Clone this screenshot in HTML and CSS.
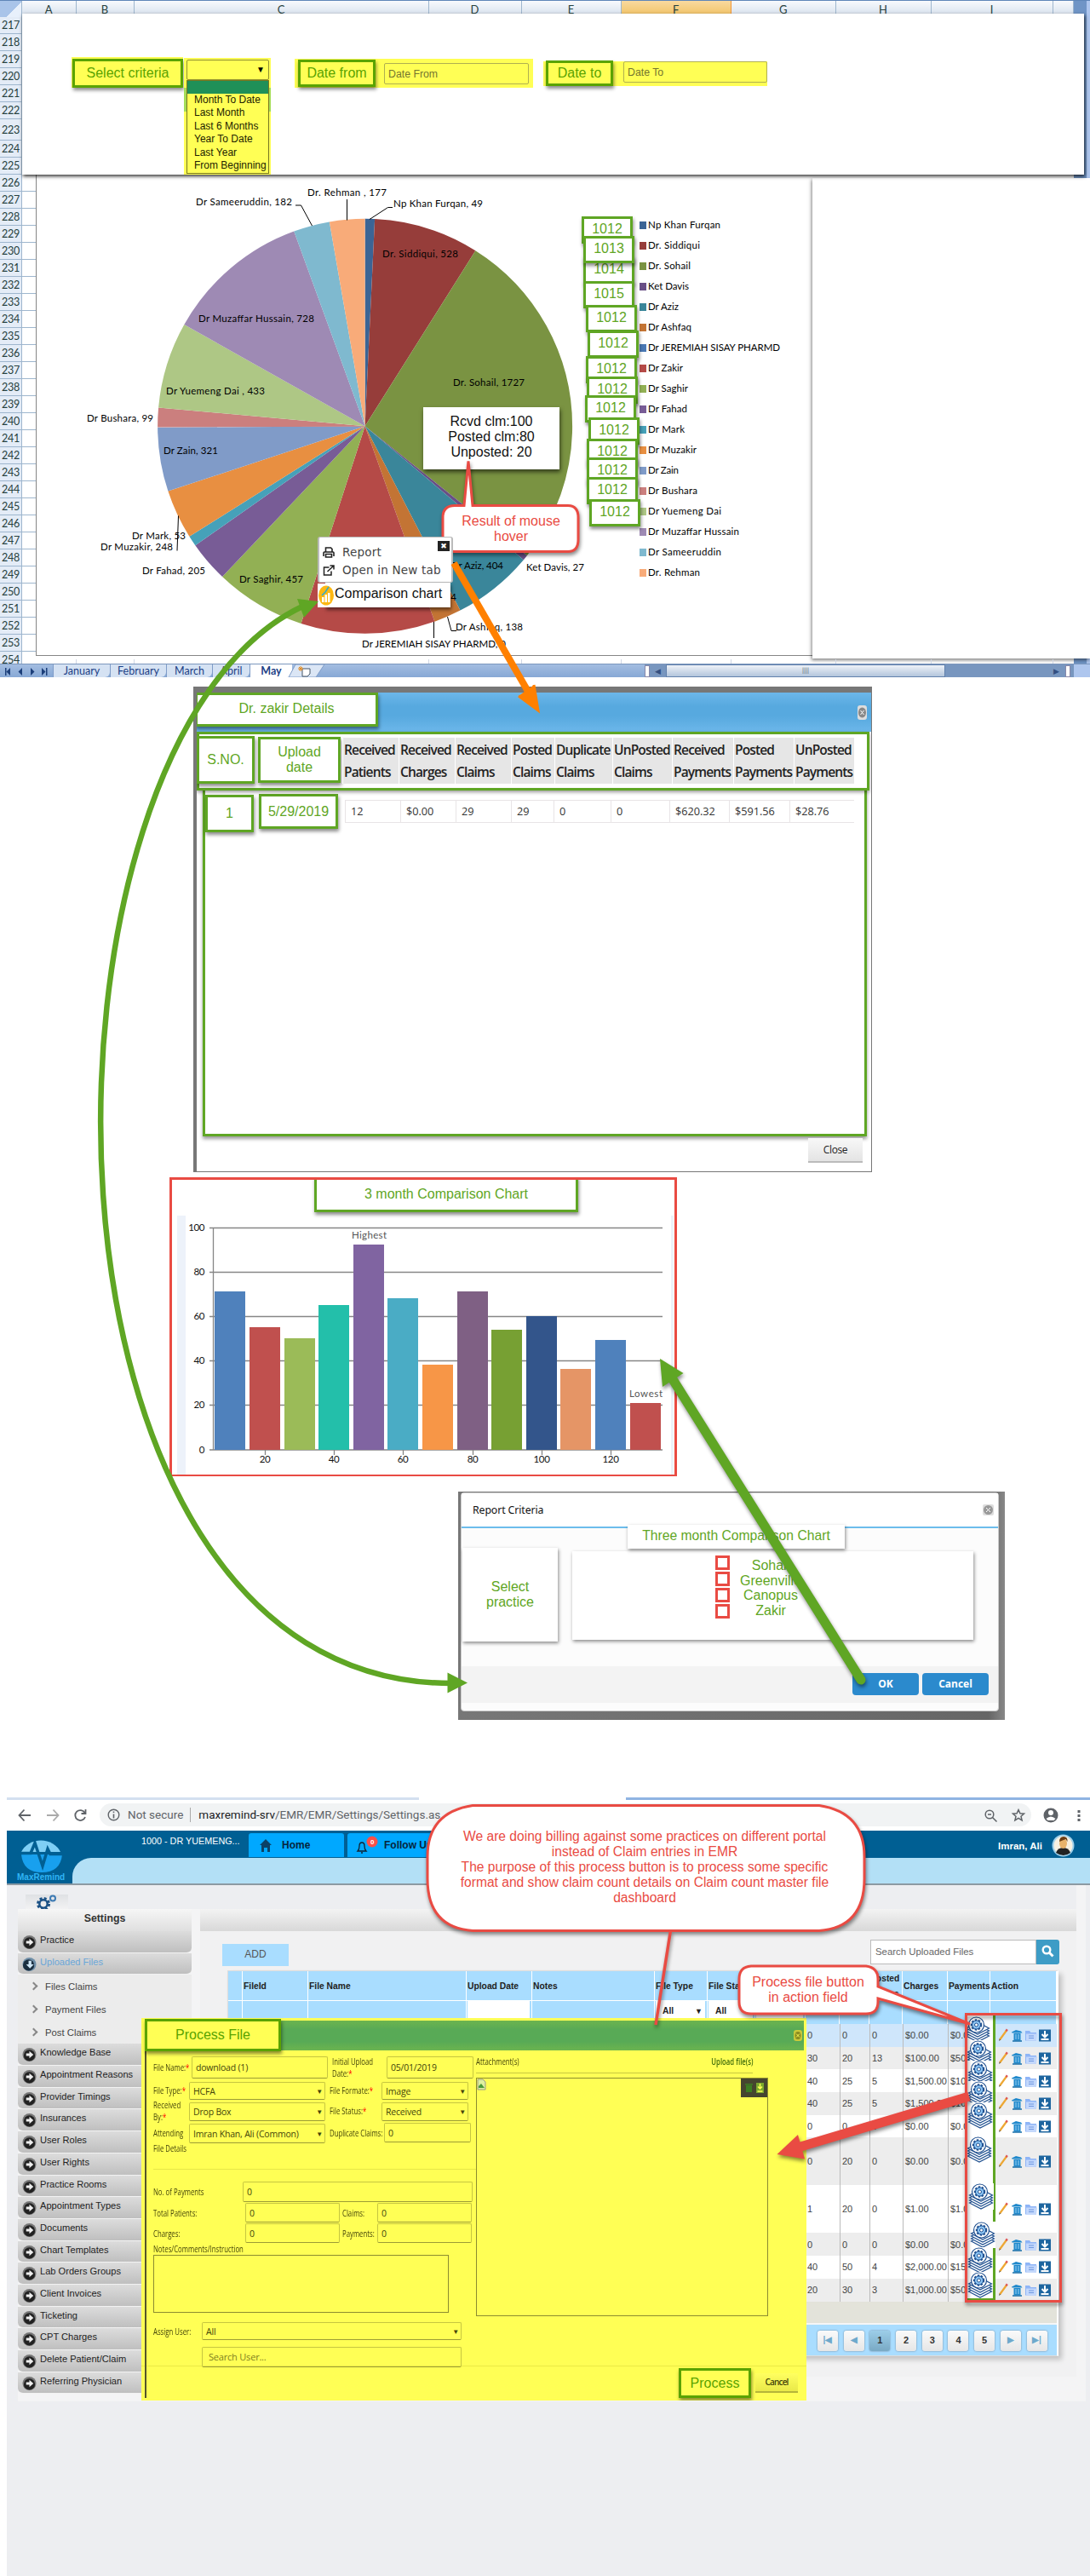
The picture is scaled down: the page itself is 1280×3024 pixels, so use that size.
FILE: index.html
```html
<!DOCTYPE html>
<html lang="en">
<head>
<meta charset="utf-8">
<title>Claim count master file dashboard</title>
<link rel="stylesheet" href="styles.css">
</head>
<body>
<svg class="defs" width="0" height="0">
  <defs>
    <symbol id="proc" viewBox="0 0 29 31">
      <g fill="#fff" stroke="#1f4f8f" stroke-width="1.2">
        <path d="M1 23l13.500 7 13.500-7-13.500-7z"/><path d="M1 20l13.500 7 13.500-7-13.500-7z"/><path d="M1 17l13.500 7 13.500-7-13.500-7z"/><path d="M1 14l13.500 7 13.500-7-13.500-7z"/>
        <circle cx="13" cy="10" r="9"/>
      </g>
      <circle cx="13" cy="10" r="5.600" fill="#8cc6f5" stroke="#1f4f8f" stroke-width="2.200" stroke-dasharray="2.400 1.600"/>
      <circle cx="13" cy="10" r="5" fill="#8cc6f5" stroke="#1f4f8f"/><circle cx="13" cy="10" r="2" fill="#fff" stroke="#1f4f8f"/>
    </symbol>
    <symbol id="acts" viewBox="0 0 62 16">
      <path d="M2 13.500L10 2.500" stroke="#eda733" stroke-width="2.200"/><path d="M9.500 3.200L10.800 1.300" stroke="#d55" stroke-width="2.400"/><path d="M1 15l.7-2.500 1.500 1z" fill="#555"/>
      <path d="M18.500 6h8v8.500h-8zM16 4.500l5-2.500 6 1.500 1.500 2h-12z" fill="#2089cc"/><path d="M21 7v6M24 7v6" stroke="#9fd4f4"/><path d="M17 15h11" stroke="#176ea8" stroke-width="1.500"/>
      <path d="M32 3h5l1.500 2H45v9.500H32z" fill="#8fb5f7"/><path d="M33 6.500h13l-1 8H33z" fill="#c3d8fc"/><path d="M36 9h6M36 11.500h6" stroke="#6f97e0"/>
      <path d="M48 1.500h14v14H48z" fill="#1d659f"/><path d="M55 3v7M51.500 7l3.500 3.500L58.500 7M50.500 13h9" stroke="#fff" stroke-width="2" fill="none"/>
    </symbol>
    <symbol id="arr" viewBox="0 0 18 18">
      <circle cx="9" cy="9" r="8.500" fill="#777"/><circle cx="9" cy="10" r="7" fill="#222"/><path d="M5 7.500h4V4.500l5 4.500-5 4.500v-3H5z" fill="#eee"/>
    </symbol>
    <symbol id="arrd" viewBox="0 0 18 18">
      <circle cx="9" cy="9" r="8.500" fill="#6f8fa8"/><circle cx="8" cy="10" r="7" fill="#1b2f40"/><path d="M8 4.500h3.500V9h3L9.700 14 5 9h3z" fill="#cfe6f5"/>
    </symbol>
  </defs>
</svg>

<section class="sheet">
  <div class="cols"><b class="corner"></b><b>A</b><b>B</b><b>C</b><b>D</b><b>E</b><b class="on">F</b><b>G</b><b>H</b><b>I</b><b></b></div>
  <div class="rows"><b>217</b><b>218</b><b>219</b><b>220</b><b>221</b><b>222</b><b class="tall">223</b><b>224</b><b>225</b><b>226</b><b>227</b><b>228</b><b>229</b><b>230</b><b>231</b><b>232</b><b>233</b><b>234</b><b>235</b><b>236</b><b>237</b><b>238</b><b>239</b><b>240</b><b>241</b><b>242</b><b>243</b><b>244</b><b>245</b><b>246</b><b>247</b><b>248</b><b>249</b><b>250</b><b>251</b><b>252</b><b>253</b><b>254</b></div>
  <div class="vscroll"></div>
  <svg class="pie" width="912" height="566" viewBox="42 204 912 566">
    <rect x="42.500" y="204" width="915" height="565.500" fill="#fff" stroke="#868686"/>
    <g class="slices" transform="rotate(-90 428.600 500.300)">
      <circle cx="428.600" cy="500.300" r="121.750" pathLength="6450" stroke="#3b6495" stroke-dasharray="49 6450"/>
      <circle cx="428.600" cy="500.300" r="121.750" pathLength="6450" stroke="#963d3a" stroke-dasharray="528 6450" stroke-dashoffset="-49"/>
      <circle cx="428.600" cy="500.300" r="121.750" pathLength="6450" stroke="#7a9342" stroke-dasharray="1727 6450" stroke-dashoffset="-577"/>
      <circle cx="428.600" cy="500.300" r="121.750" pathLength="6450" stroke="#694f86" stroke-dasharray="27 6450" stroke-dashoffset="-2304"/>
      <circle cx="428.600" cy="500.300" r="121.750" pathLength="6450" stroke="#3a869a" stroke-dasharray="404 6450" stroke-dashoffset="-2331"/>
      <circle cx="428.600" cy="500.300" r="121.750" pathLength="6450" stroke="#c37434" stroke-dasharray="138 6450" stroke-dashoffset="-2735"/>
      <circle cx="428.600" cy="500.300" r="121.750" pathLength="6450" stroke="#b54a47" stroke-dasharray="674 6450" stroke-dashoffset="-2873"/>
      <circle cx="428.600" cy="500.300" r="121.750" pathLength="6450" stroke="#92b054" stroke-dasharray="457 6450" stroke-dashoffset="-3547"/>
      <circle cx="428.600" cy="500.300" r="121.750" pathLength="6450" stroke="#785c96" stroke-dasharray="205 6450" stroke-dashoffset="-4004"/>
      <circle cx="428.600" cy="500.300" r="121.750" pathLength="6450" stroke="#46a1b9" stroke-dasharray="53 6450" stroke-dashoffset="-4209"/>
      <circle cx="428.600" cy="500.300" r="121.750" pathLength="6450" stroke="#e88f41" stroke-dasharray="248 6450" stroke-dashoffset="-4262"/>
      <circle cx="428.600" cy="500.300" r="121.750" pathLength="6450" stroke="#809bc8" stroke-dasharray="321 6450" stroke-dashoffset="-4510"/>
      <circle cx="428.600" cy="500.300" r="121.750" pathLength="6450" stroke="#cb7f7e" stroke-dasharray="99 6450" stroke-dashoffset="-4831"/>
      <circle cx="428.600" cy="500.300" r="121.750" pathLength="6450" stroke="#aec785" stroke-dasharray="433 6450" stroke-dashoffset="-4930"/>
      <circle cx="428.600" cy="500.300" r="121.750" pathLength="6450" stroke="#9e8ab4" stroke-dasharray="728 6450" stroke-dashoffset="-5363"/>
      <circle cx="428.600" cy="500.300" r="121.750" pathLength="6450" stroke="#7fb9cf" stroke-dasharray="182 6450" stroke-dashoffset="-6091"/>
      <circle cx="428.600" cy="500.300" r="121.750" pathLength="6450" stroke="#f8ab79" stroke-dasharray="177 6450" stroke-dashoffset="-6273"/>
    </g>
    <path d="M347 241h6.500L366.500 265M407.500 234v24.500M461 243.500h-5.500L434 257.500M209.500 605.500L208 646.500M509.500 730v19M525.500 724l4.500 16.500h6" fill="none" stroke="#000"/>
    <g class="cal">
      <text x="230" y="241" textLength="113">Dr Sameeruddin, 182</text>
      <text x="361" y="230" textLength="93">Dr. Rehman , 177</text>
      <text x="462" y="243" textLength="105">Np Khan Furqan, 49</text>
      <text x="449" y="302" textLength="89">Dr. Siddiqui, 528</text>
      <text x="233" y="378" textLength="136">Dr Muzaffar Hussain, 728</text>
      <text x="532" y="453" textLength="84">Dr. Sohail, 1727</text>
      <text x="195" y="463" textLength="116">Dr Yuemeng Dai , 433</text>
      <text x="102" y="495" textLength="78">Dr Bushara, 99</text>
      <text x="192" y="533" textLength="64">Dr Zain, 321</text>
      <text x="155" y="633" textLength="63">Dr Mark, 53</text>
      <text x="118" y="646" textLength="85">Dr Muzakir, 248</text>
      <text x="167" y="674" textLength="74">Dr Fahad, 205</text>
      <text x="281" y="684" textLength="75">Dr Saghir, 457</text>
      <text x="530" y="668" textLength="61">Dr Aziz, 404</text>
      <text x="468" y="705" textLength="68">Dr Zakir, 674</text>
      <text x="618" y="670" textLength="68">Ket Davis, 27</text>
      <text x="535" y="740" textLength="79">Dr Ashfaq, 138</text>
      <text x="425" y="760" textLength="169">Dr JEREMIAH SISAY PHARMD, 0</text>
      <text x="761" y="268" textLength="85">Np Khan Furqan</text>
      <text x="761" y="292" textLength="61">Dr. Siddiqui</text>
      <text x="761" y="316" textLength="50">Dr. Sohail</text>
      <text x="761" y="340" textLength="48">Ket Davis</text>
      <text x="761" y="364" textLength="36">Dr Aziz</text>
      <text x="761" y="388" textLength="51">Dr Ashfaq</text>
      <text x="761" y="412" textLength="155">Dr JEREMIAH SISAY PHARMD</text>
      <text x="761" y="436" textLength="41">Dr Zakir</text>
      <text x="761" y="460" textLength="47">Dr Saghir</text>
      <text x="761" y="484" textLength="46">Dr Fahad</text>
      <text x="761" y="508" textLength="43">Dr Mark</text>
      <text x="761" y="532" textLength="57">Dr Muzakir</text>
      <text x="761" y="556" textLength="36">Dr Zain</text>
      <text x="761" y="580" textLength="58">Dr Bushara</text>
      <text x="761" y="604" textLength="86">Dr Yuemeng Dai</text>
      <text x="761" y="628" textLength="107">Dr Muzaffar Hussain</text>
      <text x="761" y="652" textLength="86">Dr Sameeruddin</text>
      <text x="761" y="676" textLength="61">Dr. Rehman</text>
    </g>
    <path fill="#3b6495" d="M751 260h8v9h-8z"/><path fill="#963d3a" d="M751 284h8v9h-8z"/><path fill="#7a9342" d="M751 308h8v9h-8z"/><path fill="#694f86" d="M751 332h8v9h-8z"/><path fill="#3a869a" d="M751 356h8v9h-8z"/><path fill="#c37434" d="M751 380h8v9h-8z"/><path fill="#4a78b4" d="M751 404h8v9h-8z"/><path fill="#b54a47" d="M751 428h8v9h-8z"/><path fill="#92b054" d="M751 452h8v9h-8z"/><path fill="#785c96" d="M751 476h8v9h-8z"/><path fill="#46a1b9" d="M751 500h8v9h-8z"/><path fill="#e88f41" d="M751 524h8v9h-8z"/><path fill="#809bc8" d="M751 548h8v9h-8z"/><path fill="#cb7f7e" d="M751 572h8v9h-8z"/><path fill="#aec785" d="M751 596h8v9h-8z"/><path fill="#9e8ab4" d="M751 620h8v9h-8z"/><path fill="#7fb9cf" d="M751 644h8v9h-8z"/><path fill="#f8ab79" d="M751 668h8v9h-8z"/>
  </svg>
  <div class="blank"></div>
  <div class="under"><i></i><i></i><i></i><i></i><i></i><i></i><i></i><i></i><i></i></div>
  <div class="tabs">
    <svg width="62" height="16"><path d="M6 4h1.500v9H6zM12 4v9L7.500 8.500zM26 4v9l-4.500-4.500zM36 4v9l4.500-4.500zM49 4v9l4.500-4.500zM54 4h1.500v9H54z" fill="#1c3f7a"/></svg>
    <span class="t1">January</span><span class="t2">February</span><span class="t3">March</span><span class="t4">April</span><span class="may">May</span>
    <svg class="newtab" width="44" height="16"><path d="M8 0h34L32 15H0z" fill="#dbe6f5" stroke="#7f9cc8"/><path d="M16 5h9v6l-3 3h-6z" fill="#fff" stroke="#456"/><path d="M11 5h6M14 2v6M12 3l4 4M16 3l-4 4" stroke="#e08a20"/></svg>
    <div class="hscroll"><i></i><u>◀</u><b>||||</b><u class="r">▶</u><i></i></div>
  </div>

  <div class="panel">
    <div class="hl h1"><span class="tag crit">Select criteria</span></div>
    <div class="drop">
      <div class="sel">▼</div>
      <div class="list"><b></b><span>Month To Date</span><span>Last Month</span><span>Last 6 Months</span><span>Year To Date</span><span>Last Year</span><span>From Beginning</span></div>
    </div>
    <div class="hl h2"><span class="tag">Date from</span><span class="inp">Date From</span></div>
    <div class="hl h3"><span class="tag">Date to</span><span class="inp">Date To</span></div>
  </div>

  <div class="ids">
    <span class="tag" style="left:683px;top:254px">1012</span><span class="tag" style="left:685px;top:301px">1014</span><span class="tag" style="left:685px;top:277px">1013</span><span class="tag" style="left:685px;top:330px">1015</span><span class="tag" style="left:688px;top:358px">1012</span><span class="tag" style="left:690px;top:388px">1012</span><span class="tag" style="left:688px;top:418px">1012</span><span class="tag" style="left:689px;top:442px">1012</span><span class="tag" style="left:687px;top:464px">1012</span><span class="tag" style="left:691px;top:490px">1012</span><span class="tag" style="left:689px;top:515px">1012</span><span class="tag" style="left:689px;top:537px">1012</span><span class="tag" style="left:689px;top:560px">1012</span><span class="tag" style="left:692px;top:586px">1012</span>
  </div>
  <div class="tip">Rcvd clm:100<br>Posted clm:80<br>Unposted: 20</div>
  <svg class="bubble" width="180" height="125" viewBox="510 535 180 125"><path class="sh" d="M534 593.500h11l5-52 5 52h112q12 0 12 14v26q0 14-12 14H534q-14 0-14-14v-26q0-14 14-14z" fill="#fff" stroke="#e94b43" stroke-width="3"/></svg>
  <div class="menu">
    <div><svg width="14" height="13" viewBox="0 0 14 13"><path d="M3.500 6V1h6l1.500 1.500V6M1 11V7q0-1 1-1h10q1 0 1 1v4M3.500 8.500h7v3.500h-7z" fill="none" stroke="#222" stroke-width="1.600"/></svg>Report</div>
    <div><svg width="14" height="13" viewBox="0 0 14 13"><path d="M7.500 3H1.500v9H10V7.500M8.500 1H13v4.500M13 1L5.500 8" fill="none" stroke="#222" stroke-width="1.500"/></svg>Open in New tab</div>
    <b>✖</b>
  </div>
  <div class="cmp">Comparison chart</div>
  <svg class="cmpicon" width="19" height="28"><path d="M0 0h10v28H0z" fill="#fff"/><ellipse cx="10" cy="14" rx="9" ry="11.500" fill="#fdb813"/><path d="M5 16h2.500v6H5zM8.500 13h2.500v9H8.500zM12 11h2.500v11H12z" fill="#fff"/><path d="M5 14l4-4 4-6" stroke="#3ac" stroke-width="1.600" fill="none"/></svg>
</section>

<section class="details">
  <header></header>
  <span class="tag dtitle">Dr. zakir Details</span>
  <svg class="x" width="11" height="17"><rect width="11" height="17" rx="3" fill="#ddd"/><ellipse cx="5.500" cy="8.500" rx="4.500" ry="6" fill="#888"/><path d="M3.500 6l4 5M7.500 6l-4 5" stroke="#fff"/></svg>
  <div class="dhead">
    <span class="tag s">S.NO.</span><span class="tag u">Upload<br>date</span>
    <div class="g"><b>Received<br>Patients</b><b>Received<br>Charges</b><b>Received<br>Claims</b><b>Posted<br>Claims</b><b>Duplicate<br>Claims</b><b>UnPosted<br>Claims</b><b>Received<br>Payments</b><b>Posted<br>Payments</b><b>UnPosted<br>Payments</b></div>
  </div>
  <div class="dbody">
    <span class="tag n">1</span><span class="tag d">5/29/2019</span>
    <div class="g2"><i>12</i><i>$0.00</i><i>29</i><i>29</i><i>0</i><i>0</i><i>$620.32</i><i>$591.56</i><i>$28.76</i></div>
  </div>
  <div class="close">Close</div>
</section>

<section class="bars">
  <span class="tag btitle">3 month Comparison Chart</span>
  <svg width="590" height="346" viewBox="202 1385 590 346">
    <path d="M208 1427h10v304h-10zM788 1427h3v304h-3z" fill="#edf2fa"/>
    <path d="M246 1441.500h532M246 1493.500h532M246 1545.500h532M246 1597.500h532M246 1649.500h532M246 1702h532M250.500 1441v261M311.500 1702v6M392.500 1702v6M473.500 1702v6M555.500 1702v6M636.500 1702v6M717.500 1702v6" stroke="#868686" stroke-width="1.300"/>
    <g>
      <rect x="252" y="1516" width="36" height="186" fill="#4f81bc"/><rect x="293" y="1558" width="36" height="144" fill="#c0504e"/><rect x="334" y="1571" width="36" height="131" fill="#9bbb58"/><rect x="374" y="1532" width="36" height="170" fill="#23bfaa"/><rect x="415" y="1461" width="36" height="241" fill="#8064a1"/><rect x="455" y="1524" width="36" height="178" fill="#4aacc5"/><rect x="496" y="1602" width="36" height="100" fill="#f79647"/><rect x="537" y="1516" width="36" height="186" fill="#7f6084"/><rect x="577" y="1561" width="36" height="141" fill="#77a033"/><rect x="618" y="1545" width="36" height="157" fill="#33558b"/><rect x="658" y="1607" width="36" height="95" fill="#e59566"/><rect x="699" y="1573" width="36" height="129" fill="#4f81bc"/><rect x="740" y="1647" width="36" height="55" fill="#c0504e"/>
    </g>
    <g class="ax" text-anchor="end"><text x="240" y="1445">100</text><text x="240" y="1497">80</text><text x="240" y="1549">60</text><text x="240" y="1601">40</text><text x="240" y="1653">20</text><text x="240" y="1706">0</text></g>
    <g class="ax" text-anchor="middle"><text x="311" y="1717">20</text><text x="392" y="1717">40</text><text x="473" y="1717">60</text><text x="555" y="1717">80</text><text x="636" y="1717">100</text><text x="717" y="1717">120</text></g>
    <g class="cal"><text x="413" y="1454" textLength="41" fill="#555">Highest</text><text x="739" y="1640" textLength="39" fill="#555">Lowest</text></g>
  </svg>
</section>

<section class="crit-dlg">
  <div class="inner">
    <header>Report Criteria <svg width="13" height="13"><rect width="13" height="13" rx="2" fill="#ddd"/><circle cx="6.500" cy="6.500" r="5.500" fill="#999"/><path d="M4 4l5 5M9 4l-5 5" stroke="#fff"/></svg></header>
    <main><div class="prac">Select<br>practice</div>
      <div class="opts"><div class="cks"><i></i><i></i><i></i><i></i></div><div>Sohail<br>Greenville<br>Canopus<br>Zakir</div></div></main>
    <footer><b>OK</b><b>Cancel</b></footer>
  </div>
  <div class="ctitle">Three month Comparison Chart</div>
</section>

<section class="browser">
  <div class="strip"></div>
  <div class="addr">
    <svg width="100" height="35"><g fill="none" stroke="#5f6368" stroke-width="1.800"><path d="M28 18H15M20.500 11.500L14.500 18l6 6.500"/><path d="M47 18h13M54.500 11.500l6 6.500-6 6.500" stroke="#aaa"/><path d="M91.500 15a6 6 0 1 0 .5 5M92.500 11v5h-5"/></g></svg>
    <div class="pill"><svg width="15" height="15"><circle cx="7.500" cy="7.500" r="6.300" fill="none" stroke="#5f6368" stroke-width="1.400"/><path d="M7.500 6.500v5M7.500 3.500v1.600" stroke="#5f6368" stroke-width="1.600"/></svg><span>Not secure</span><em></em><span class="host">maxremind-srv</span><span class="path">/EMR/EMR/Settings/Settings.as</span>
      <svg class="mag" width="50" height="18"><g fill="none" stroke="#5f6368" stroke-width="1.500"><circle cx="7" cy="8" r="4.800"/><path d="M10.500 11.500l5 5M5 8h4"/><path d="M41 2.500l1.900 4.300 4.600.4-3.500 3 1.100 4.600-4.100-2.500-4.100 2.500 1.100-4.600-3.500-3 4.600-.4z"/></g></svg></div>
    <svg width="60" height="35"><circle cx="15" cy="18" r="8.500" fill="#5f6368"/><circle cx="15" cy="15" r="3" fill="#fff"/><path d="M9.500 22q5.500-5 11 0l-2 2h-7z" fill="#fff"/><path d="M46.500 12h3v3h-3zM46.500 17h3v3h-3zM46.500 22h3v3h-3z" fill="#5f6368"/></svg>
  </div>
  <div class="top">
    <div class="logo"><svg width="60" height="47" viewBox="0 0 60 47"><path d="M5 22a25 22 0 0 1 46 0z" fill="#7fcff5"/><path d="M5 25h48q-2 21-24 21T5 25z" fill="#18a0ee"/><path d="M0 23.500h16l5-12 9 27 6-20 3 6h18" fill="none" stroke="#005f93" stroke-width="3.500"/></svg><b>MaxRemind</b></div>
    <span class="pr">1000 - DR YUEMENG...</span>
    <div class="nav n1"><svg width="14" height="15"><path d="M7 0l7 7h-2v8H9v-5H5v5H2V7H0z" fill="#0b4266"/></svg>Home</div>
    <div class="nav n2"><svg width="28" height="24"><path d="M4 19q2-2 2-6 0-4 3-4t3 4q0 4 2 6zM8 21h2" fill="none" stroke="#123" stroke-width="1.300"/><circle cx="21" cy="8" r="6.500" fill="#f9504a"/><text x="19" y="11" font-size="8" font-weight="bold" fill="#fff">0</text></svg>Follow Up</div>
    <span class="who">Imran, Ali</span><svg width="27" height="27"><circle cx="13.500" cy="13.500" r="12" fill="#f7f1e2" stroke="#9fd0ea" stroke-width="2"/><path d="M5 22q2-6 8.500-6t8.500 6q-8 6-17 0z" fill="#222"/><ellipse cx="13.500" cy="11" rx="4.500" ry="6" fill="#e8b36b"/><path d="M9 9q0-6 5-6t4.500 6l-2-3z" fill="#6b3d13"/></svg>
  </div>
  <div class="sub"></div>
  <div class="work">
    <div class="gear"><span><svg width="26" height="17" viewBox="0 0 26 17"><circle cx="9" cy="11" r="6" fill="none" stroke="#1c5286" stroke-width="4" stroke-dasharray="2.700 2"/><circle cx="9" cy="11" r="4.700" fill="none" stroke="#1c5286" stroke-width="2.500"/><circle cx="20" cy="4.500" r="3" fill="none" stroke="#3d7ab3" stroke-width="2"/></svg></span></div>
    <div class="side">
      <h3>Settings</h3>
      <a><svg><use href="#arr"/></svg>Practice</a><a class="open"><svg><use href="#arrd"/></svg>Uploaded Files</a>
      <p><b></b>Files Claims</p><p><b></b>Payment Files</p><p><b></b>Post Claims</p>
      <a><svg><use href="#arr"/></svg>Knowledge Base</a><a><svg><use href="#arr"/></svg>Appointment Reasons</a><a><svg><use href="#arr"/></svg>Provider Timings</a><a><svg><use href="#arr"/></svg>Insurances</a><a><svg><use href="#arr"/></svg>User Roles</a><a><svg><use href="#arr"/></svg>User Rights</a><a><svg><use href="#arr"/></svg>Practice Rooms</a><a><svg><use href="#arr"/></svg>Appointment Types</a><a><svg><use href="#arr"/></svg>Documents</a><a><svg><use href="#arr"/></svg>Chart Templates</a><a><svg><use href="#arr"/></svg>Lab Orders Groups</a><a><svg><use href="#arr"/></svg>Client Invoices</a><a><svg><use href="#arr"/></svg>Ticketing</a><a><svg><use href="#arr"/></svg>CPT Charges</a><a><svg><use href="#arr"/></svg>Delete Patient/Claim</a><a><svg><use href="#arr"/></svg>Referring Physician</a>
    </div>
    <div class="maincol">
      <div class="band"></div>
      <div class="tools"><span class="add">ADD</span><span class="search">Search Uploaded Files</span><span class="go"><svg width="15" height="15"><circle cx="6" cy="6" r="4.300" fill="none" stroke="#fff" stroke-width="2.400"/><path d="M9 9l4.500 4.500" stroke="#fff" stroke-width="3"/></svg></span></div>
      <div class="tbl">
        <div class="tr th"><b></b><b>FileId</b><b>File Name</b><b>Upload Date</b><b>Notes</b><b>File Type</b><b>File Status</b><b></b><b></b><b></b><b>Posted<br>Claims</b><b>Charges</b><b>Payments</b><b>Action</b></div>
        <div class="tr tf"><b></b><b></b><b></b><b><i></i></b><b></b><b><i>All<u>▼</u></i></b><b><i>All<u>▼</u></i></b><b><i>All</i></b><b></b><b></b><b></b><b></b><b></b><b></b></div>
        <div class="row sel1"><i>0</i><i>0</i><i>0</i><i>$0.00</i><i>$0.00</i><svg><use href="#acts"/></svg></div>
        <div class="row odd"><i>30</i><i>20</i><i>13</i><i>$100.00</i><i>$50.00</i><svg><use href="#acts"/></svg></div>
        <div class="row"><i>40</i><i>25</i><i>5</i><i>$1,500.00</i><i>$10.00</i><svg><use href="#acts"/></svg></div>
        <div class="row odd"><i>40</i><i>25</i><i>5</i><i>$1,500.00</i><i>$10.00</i><svg><use href="#acts"/></svg></div>
        <div class="row"><i>0</i><i>0</i><i>0</i><i>$0.00</i><i>$0.00</i><svg><use href="#acts"/></svg></div>
        <div class="row odd big"><i>0</i><i>20</i><i>0</i><i>$0.00</i><i>$0.00</i><svg><use href="#acts"/></svg></div>
        <div class="row big"><i>1</i><i>20</i><i>0</i><i>$1.00</i><i>$1.00</i><svg><use href="#acts"/></svg></div>
        <div class="row odd"><i>0</i><i>0</i><i>0</i><i>$0.00</i><i>$0.00</i><svg><use href="#acts"/></svg></div>
        <div class="row"><i>40</i><i>50</i><i>4</i><i>$2,000.00</i><i>$15.00</i><svg><use href="#acts"/></svg></div>
        <div class="row odd"><i>20</i><i>30</i><i>3</i><i>$1,000.00</i><i>$50.00</i><svg><use href="#acts"/></svg></div>
        <div class="foot"></div>
        <div class="pager"><b class="ar">|◀</b><b class="ar">◀</b><b class="cur">1</b><b>2</b><b>3</b><b>4</b><b>5</b><b class="ar">▶</b><b class="ar">▶|</b></div>
      </div>
    </div>
  </div>
</section>

<section class="proc">
  <div class="pbar"><svg width="10" height="13"><rect width="10" height="13" rx="3" fill="#c9c93a"/><ellipse cx="5" cy="6.500" rx="3.500" ry="4.500" fill="#8a8a20"/><path d="M3 4.500l4 4M7 4.500l-4 4" stroke="#ff5"/></svg></div>
  <span class="tag ptitle">Process File</span>
  <div class="pcols">
    <div class="form">
      <div class="r r1"><label><span>File Name:<em>*</em></span></label><i class="w1">download (1)</i><label class="l2"><span>Initial Upload<br>Date:<em>*</em></span></label><i class="w2">05/01/2019</i></div>
      <div class="r r2"><label><span>File Type:<em>*</em></span></label><i class="w1 s">HCFA<u>▼</u></i><label class="l2"><span>File Formate:<em>*</em></span></label><i class="w2 s">Image<u>▼</u></i></div>
      <div class="r r3"><label><span>Received<br>By:<em>*</em></span></label><i class="w1 s">Drop Box<u>▼</u></i><label class="l2"><span>File Status:<em>*</em></span></label><i class="w2 s">Received<u>▼</u></i></div>
      <div class="r r4"><label><span>Attending</span></label><i class="w1 s">Imran Khan, Ali (Common)<u>▼</u></i><label class="l2"><span>Duplicate Claims:</span></label><i class="w2">0</i></div>
      <div class="fd"><span>File Details</span></div>
      <div class="r r5"><label class="l3"><span>No. of Payments</span></label><i class="w3">0</i></div>
      <div class="r r6"><label class="l4"><span>Total Patients:</span></label><i class="w4">0</i><label class="l5"><span>Claims:</span></label><i class="w4">0</i></div>
      <div class="r r6"><label class="l4"><span>Charges:</span></label><i class="w4">0</i><label class="l5"><span>Payments:</span></label><i class="w4">0</i></div>
      <div class="nt"><span>Notes/Comments/Instruction</span></div>
      <div class="ta"></div>
      <div class="r r7"><label class="l6"><span>Assign User:</span></label><i class="w5">All<u>▼</u></i></div>
      <div class="r r8"><label class="l6"></label><i class="w5 ph">Search User...</i></div>
    </div>
    <div class="att"><div class="ah"><span>Attachment(s)</span><span class="up">Upload file(s)</span></div>
      <div class="abox"><svg width="11" height="14"><path d="M1 1h6l3 3v9H1z" fill="#dff0a0" stroke="#998"/><path d="M2 9l3-3 4 5H2z" fill="#4a9a3a"/></svg><svg class="dk" width="31" height="22"><rect width="31" height="22" fill="#45452f"/><path d="M6 8h7v8H6zM5 6h9v1.500H5z" fill="#3c7d22"/><path d="M18 5h9v12h-9z" fill="#7aa82c"/><path d="M22.500 6v6M20 9.500l2.500 2.500L25 9.500M19.500 15h6" stroke="#ff5" stroke-width="1.500" fill="none"/></svg></div></div>
  </div>
  <div class="pfoot"><span class="tag">Process</span><b>Cancel</b></div>
</section>

<div class="pcol"><svg style="left:-3px;top:1px"><use href="#proc"/></svg><svg style="left:-1px;top:29px"><use href="#proc"/></svg><svg style="left:0px;top:53px"><use href="#proc"/></svg><svg style="left:0px;top:77px"><use href="#proc"/></svg><svg style="left:0px;top:102px"><use href="#proc"/></svg><svg style="left:-1px;top:142px"><use href="#proc"/></svg><svg style="left:1px;top:197px"><use href="#proc"/></svg><svg style="left:3px;top:242px"><use href="#proc"/></svg><svg style="left:0px;top:272px"><use href="#proc"/></svg><svg style="left:0px;top:301px"><use href="#proc"/></svg></div>

<svg class="marks" width="1280" height="3024">
  <g class="sh">
    <path d="M555 2119.500h407q53 8 53 60v26q0 57-53 61H555q-53-4-53-61v-26q0-52 53-60z" fill="#fff" stroke="#e94b43" stroke-width="3"/>
    <path d="M787.500 2266L770 2377" stroke="#e94b43" stroke-width="3.500"/>
    <path d="M882 2308h135q14 2 14 15v9l108 44-108-30v4q0 14-14 14H882q-14 0-14-14v-27q0-14 14-15z" fill="#fff" stroke="#e94b43" stroke-width="3"/>
    <path d="M1138 2461L930 2523" stroke="#e94b43" stroke-width="11"/><path d="M912.500 2529L937 2506l8 28.500z" fill="#e94b43"/>
    <rect x="1134.500" y="2364.500" width="111" height="337" fill="none" stroke="#e94b43" stroke-width="3"/>
    <path d="M1011 1972L788 1616" stroke="#5fa624" stroke-width="11" stroke-linecap="round"/><path d="M775 1595l27.500 17-24.500 16z" fill="#5fa624"/>
  </g>
  <path d="M355 712C20 870 8 1976 530 1976" fill="none" stroke="#5fa624" stroke-width="6.500"/>
  <path d="M374 706l-25-3 8 22zM549 1975.500l-23.500-12v24z" fill="#5fa624"/>
  <path d="M533 661L626 822" stroke="#ff8000" stroke-width="8"/><path d="M627 804l5 30-23-17" fill="#ff8000" stroke="#ff8000" stroke-width="3"/>
</svg>
<div class="note na">Result of mouse<br>hover</div>
<div class="note nb">We are doing billing against some practices on different portal<br>instead of Claim entries in EMR<br>The purpose of this process button is to process some specific<br>format and show claim count details on Claim count master file<br>dashboard</div>
<div class="note nc">Process file button<br>in action field</div>
</body>
</html>
```

FILE: styles.css
```css
*{box-sizing:border-box}
body{margin:0;position:relative;width:1280px;height:3024px;background:#fff;overflow:hidden;font:16px/18px "Liberation Sans",Arial,sans-serif;color:#222}
i,em,u{font-style:normal;text-decoration:none}
svg{display:block;flex:none}
.defs{position:absolute}
section{position:absolute;overflow:hidden}
.tag{display:flex;align-items:center;justify-content:center;text-align:center;border:3px solid #5fa624;color:#5fa624;background:#fff;box-shadow:1px 3px 4px rgba(0,0,0,.45);flex:none}

/* spreadsheet */
.sheet{left:0;top:0;width:1280px;height:795px;background:#fff}
.cols{display:grid;grid-template-columns:26px 63.500px 68px 346px 109px 117px 129.500px 122.500px 112px 143px 24.500px;height:20px;border-top:1px solid #5f86b8;background:linear-gradient(#f8fafd,#d3deec)}
.cols b{font:13px/20px Lato,sans-serif;text-align:center;border-right:1px solid #9eb6ce;color:#27413e;height:19px}
.cols .on{background:linear-gradient(#f9d99f,#f1c15f);border-color:#f29536}
.cols .corner{background:linear-gradient(135deg,#a9c4e9 60%,#e8f0fb 60%)}
.rows{width:42px;height:759px;overflow:hidden}
.rows b{display:block;height:20px;font:12.500px/19px Lato,sans-serif;letter-spacing:-.2px;padding-left:2px;color:#27413e;border-bottom:1px solid #9eb6ce;background:linear-gradient(90deg,#e4ecf7 25px,#9eb6ce 25px 26px,#fff 26px)}
.rows .tall{height:25px;line-height:26px}
.vscroll{position:absolute;left:1261px;top:1px;width:19px;height:778px;background:linear-gradient(90deg,#7095c6 15px,#aec6ee 15px)}
.pie{position:absolute;left:42px;top:204px}
.slices circle{fill:none;stroke-width:243.500px}
.cal text{font:11.500px Lato,sans-serif}
.blank{position:absolute;left:954px;top:209px;width:326px;height:564px;background:#fff;box-shadow:-1px 2px 4px rgba(0,0,0,.5)}
.under{position:absolute;left:0;top:774px;height:5px;display:grid;grid-template-columns:89.500px 68px 346px 109px 117px 129.500px 122.500px 112px 143px}
.under i{border-right:1px solid #d0d7e5}
.tabs{display:flex;position:relative;height:16px;background:linear-gradient(#a3bde1,#87a8d5);border-top:1px solid #7c97bd;font:12.500px/15px Lato,sans-serif;color:#1c3f86;align-items:stretch}
.tabs span{background:#d5e2f3;border-left:1px solid #7f9cc8;border-radius:0 0 6px 0;text-align:center}
.t1{width:67px}.t2{width:66px}.t3{width:54px}.t4{width:44px}
.tabs .may{width:50px;background:#fff;font-weight:bold}
.newtab{margin-left:-4px}
.hscroll{margin-left:auto;width:523px;display:flex;align-items:center;background:linear-gradient(90deg,#7896bf 504px,#aec6ee 504px)}
.hscroll i{width:6px;height:14px;background:#fff;border:1px solid #88a}
.hscroll u{font-size:9px;color:#334f80;margin-left:6px;width:13px}
.hscroll b{width:328px;height:15px;background:linear-gradient(#eef2f8,#b3c5dc);border:1px solid #6281ad;text-align:center;font:8px/13px Lato;color:#567}
.hscroll .r{margin-left:127px;width:14px}
.panel{position:absolute;left:26px;top:16px;width:1247px;height:189px;background:#fff;box-shadow:1px 2px 4px rgba(0,0,0,.8)}
.hl{position:absolute;background:#ffff55;display:flex}
.hl .tag{background:#ffff55;border-color:#5aa300;color:#5aa300}
.h1{left:58px;top:51px;width:131px;height:36px;padding:2px 0 0 1px}.crit{width:130px;height:34px}
.h2{left:320px;top:53px;width:280px;height:34px;padding:1px 0 0 4px;gap:10px}.h2 .tag{width:91px;height:32px}
.h3{left:612px;top:56px;width:263px;height:29px;gap:12px;padding-left:3px}.h3 .tag{width:79px;height:30px;margin-top:-1px}
.inp{width:170px;height:25px;border:1px solid #b0b050;border-radius:2px;font-size:12.300px;line-height:24px;padding-left:4px;color:#75752f;margin-top:4px}
.h3 .inp{margin-top:0}
.drop{position:absolute;left:190px;top:52px;width:102px;height:137px;background:linear-gradient(#ffff55 35px,#a5dd58 35px 63px,#ffff55 63px);padding:2px 2px 0 3px}
.sel{height:24px;border:1px solid #909030;border-radius:2px;text-align:right;font-size:10px;line-height:22px;padding-right:4px;color:#000;background:#ffff55}
.list{height:110px;border:1px solid #777720;background:#ffff55;font-size:12px;line-height:15.400px;color:#222200}
.list b{display:block;height:15px;background:#1f9058}.list span{display:block;padding-left:8px;white-space:nowrap}
.ids .tag{position:absolute;width:60px;height:32px;padding-bottom:2px}
.tip{position:absolute;left:497px;top:478px;width:160px;height:73px;padding-top:8px;background:#fff;text-align:center;color:#111;box-shadow:1px 3px 5px rgba(0,0,0,.6)}
.bubble{position:absolute;left:510px;top:535px}
.menu{position:absolute;left:373px;top:630px;width:159px;height:54px;background:#fff;border:1px solid #bbb;border-width:1px 2px;border-radius:3px;padding:7px 0 0 4px;font:13.500px/21px "DejaVu Sans",sans-serif;color:#444;letter-spacing:.2px}
.menu div{display:flex;gap:9px;align-items:center;white-space:nowrap}
.menu b{position:absolute;left:139px;top:4px;width:14px;height:12px;background:#222;color:#fff;font-size:9px;line-height:12px;text-align:center}
.cmp{position:absolute;left:382px;top:684px;width:147px;height:29px;background:#fff;padding:4px 0 0 11px;color:#111;white-space:nowrap;box-shadow:1px 3px 4px rgba(0,0,0,.5)}
.cmpicon{position:absolute;left:373px;top:685px}

/* details dialog */
.details{left:227px;top:806px;width:797px;height:570px;background:#fff;border:solid #777;border-width:7px 1px 1px 4px}
.details header{height:46px;background:linear-gradient(#6cb7ea,#57a9df 35%,#57a9df 60%,#6cb7ea)}
.dtitle{position:absolute;left:-2px;top:0;width:215px;height:40px;padding-bottom:2px}
.details .x{position:absolute;left:776px;top:15px}
.dhead{display:flex;width:790px;height:69px;border:3px solid #5fa624;box-shadow:0 2px 4px rgba(0,0,0,.4);position:relative}
.s{width:68px;height:56px;margin:2px 0 0 -3px}.u{width:97px;height:54px;margin:3px 2px 0 4px}
.g{display:grid;grid-template-columns:66px 66px 66px 51px 68px 70px 72px 71px 71px;height:54px;margin-top:4px}
.g b{background:#e6e6e6;border-left:1px solid #fff;font:600 15.500px/25.500px "Open Sans",sans-serif;letter-spacing:-.85px;padding:2px 0 0 1px;white-space:nowrap}
.dbody{display:flex;width:780px;height:409px;margin:-3px 0 0 7px;border:3px solid #5fa624;box-shadow:0 3px 4px rgba(0,0,0,.4)}
.n{width:57px;height:44px;margin-top:5px}.d{width:93px;height:41px;margin:4px 0 0 6px}
.g2{display:grid;grid-template-columns:65px 65px 65px 50px 67px 69px 70px 71px 76px;height:27px;margin:11px 0 0 8px;border:solid #e8e4e6;border-width:1px 0}
.g2 i{border-left:1px solid #e8e4e6;font:12.700px/25px "Open Sans",sans-serif;padding-left:6px;color:#333}
.close{width:64px;height:29px;margin:2px 0 0 718px;background:linear-gradient(#f8f8f8,#e4e4e4);border-bottom:2px solid #bbb;font:12px/27px "Open Sans";letter-spacing:-.4px;text-align:center}

/* comparison chart */
.bars{left:199px;top:1382px;width:596px;height:351px;border:3px solid #e94b43;border-bottom-width:2px}
.btitle{position:absolute;left:167px;top:-4px;width:310px;height:42px;z-index:1}
.ax text{font:11.500px Lato,sans-serif;fill:#111;letter-spacing:-.4px}

/* report criteria dialog */
.crit-dlg{left:538px;top:1751px;width:642px;height:268px;background:linear-gradient(90deg,#777,#666 97%,#888);padding:1px 7px 10px 3px}
.inner{height:257px;background:#fcfcfc;border-radius:4px;border:1px solid #ccc}
.inner header{height:41px;background:#fff;border-bottom:2px solid #6cbdec;font:12.300px/37px "Noto Sans",sans-serif;letter-spacing:-.1px;color:#111;padding:0 5px 0 13px;display:flex;justify-content:space-between;align-items:center}
.inner main{display:flex;gap:17px;height:162px;padding:23px 0 0 1px;color:#5fa624;text-align:center}
.prac{width:112px;height:110px;padding-top:37px;background:#fff;box-shadow:1px 2px 4px rgba(0,0,0,.45)}
.opts{width:471px;height:104px;margin-top:4px;background:#fff;box-shadow:1px 2px 4px rgba(0,0,0,.45);display:flex;gap:12px;padding:5px 0 0 168px;line-height:17.500px}
.opts div+div{width:72px;margin-top:3px}
.cks{display:flex;flex-direction:column;gap:2px}.cks i{width:17px;height:17px;border:3px solid #e94b43}
.inner footer{display:flex;justify-content:flex-end;gap:4px;padding:8px 11px;height:43px;background:#f3f3f3}
.inner footer b{width:78px;height:26px;background:#2b8acd;color:#fff;border-radius:4px;font:bold 12px/26px "Open Sans";text-align:center}
.ctitle{position:absolute;left:199px;top:39px;width:255px;height:28px;line-height:26px;font-size:15.700px;background:#fff;color:#5fa624;text-align:center;box-shadow:1px 2px 4px rgba(0,0,0,.45)}

/* browser window */
.browser{left:8px;top:2110px;width:1272px;height:914px;background:#edeef1;font-size:12px}
.strip{height:3px;background:linear-gradient(90deg,#d3e0f0 484px,#fff 484px 727px,#8fb4e3 727px)}
.addr{height:36px;background:#fff;display:flex;font:13.500px/27px Roboto,sans-serif;color:#5f6368}
.pill{margin:4px 0 0 9px;width:1094px;height:27px;border-radius:14px;background:#f1f3f4;display:flex;align-items:center;padding-left:9px;margin-right:8px}
.pill span{margin-left:9px}.pill em{width:1px;height:17px;background:#aaa;margin-left:8px}.pill .host{color:#202124;margin-left:9px}.pill .path{margin-left:0}
.mag{margin-left:auto;margin-right:6px}
.top{height:32px;background:#005f93;display:flex;position:relative;color:#fff;padding-right:18px}
.logo{position:absolute;left:0;top:0;width:80px;height:62px;padding:3px 0 0 12px;z-index:1}
.logo b{display:block;color:#2fb4f5;font-size:10px;line-height:12px;margin-top:-1px}
.pr{margin-left:158px;width:126px;line-height:25px;font-size:10.800px}
.nav{height:28px;margin-top:3px;background:#00a8ff;color:#06263c;font-weight:bold;display:flex;align-items:center;border-radius:3px 3px 0 0}
.n1{width:112px;padding-left:13px;gap:12px}.n2{width:130px;margin-left:4px;padding-left:8px;gap:7px}
.who{margin-left:auto;font-weight:bold;font-size:11.500px;line-height:36px;margin-right:11px}.top>svg{margin-top:4px}
.sub{height:32px;background:#005f93;border-bottom:2px solid #8c9aa3}
.sub::before{content:"";display:block;height:30px;margin-left:77px;background:#b3e0f6;border-radius:22px 0 0 0}
.work{display:grid;grid-template-columns:204px 1029px;grid-template-rows:28px 578px;column-gap:10px;padding-left:13px;width:1267px;position:relative;height:606px;background:linear-gradient(90deg,#edeef1 13px,#f4f4f5 13px)}
.gear{grid-column:1/3;height:28px;background:#edeef1;padding:11px 0 0 9px}
.gear span{display:block;width:50px;height:17px;padding-left:12px;background:linear-gradient(#dfe1e4,#f2f2f3)}
.side h3{margin:0;height:26px;background:linear-gradient(#f6f6f6,#dfdfdf);text-align:center;font-size:12.300px;line-height:23px;color:#333}
.side a{display:flex;height:25.700px;border-bottom:1px solid #f2f2f2;background:linear-gradient(#dcdcdc,#bfbfbf);border-radius:0 0 6px 6px;gap:4px;padding-left:5px;line-height:20px;font-size:11.100px;color:#222;white-space:nowrap}
.side a svg{width:17px;height:18px;margin-top:4px}
.side .open{color:#6aa6d8}
.side p{margin:0;height:27px;padding-left:15px;line-height:26px;font-size:11.300px;color:#444;background:#ececec;display:flex;align-items:center;gap:12px}
.side p b{width:7px;height:7px;border:solid #888;border-width:2px 2px 0 0;transform:rotate(45deg);margin-right:-2px}
.maincol{background:#f1f1f2;height:549px}
.band{height:26px;background:linear-gradient(#f3f3f3,#d8d8d8)}
.tools{display:flex;height:46px;padding:10px 0 0 26px}
.add{width:78px;height:26px;margin-top:5px;background:#a9ddff;text-align:center;line-height:25px;color:#555}
.search{width:195px;height:29px;background:#fff;border:1px solid #bbb;margin-left:683px;padding-left:5px;line-height:27px;font-size:11.400px;color:#666}
.go{width:27px;height:29px;background:#3d9cc6;padding:6px;border-radius:0 3px 3px 0}
.tbl{margin-left:32px;width:976px;border:1px solid #ddd;border-right:2px solid #fff;box-shadow:4px 4px 6px rgba(0,0,0,.2)}
.tr{display:grid;grid-template-columns:17px 77px 186px 77px 144px 62px 56px 59px 40px 35px 39px 53px 50px 1fr;background:#a9ddff;font-size:10.300px}
.tr b{border-right:1px solid #fff;line-height:18px;align-content:center;padding-left:1px;white-space:nowrap}
.th{height:34px}.tf{height:28px;border-top:1px solid #fff}
.tf i{display:flex;justify-content:space-between;height:24px;background:#fff;line-height:24px;padding:0 3px 0 8px;margin-top:-3px;margin-right:2px}.tf u{font-size:9px}
.row{display:grid;grid-template-columns:41px 35px 39px 53px 50px 1fr;padding-left:678px;height:26.700px;align-items:stretch;background:#fff;font-size:11px;color:#444}
.row i{border-right:1px solid #bbb;display:flex;align-items:center;padding-left:2px}
.row svg{width:62px;height:16px;align-self:center;margin-left:8px}
.row.odd{background:#ededed}.row.sel1{background:#cfe6fb}.row.big{height:56px}
.foot{height:27px;background:#e3e3da;border-bottom:2px solid #f6f6f6}
.pager{height:36px;background:#a9ddff;display:flex;gap:6.700px;padding:7px 0 0 692px}
.pager b{width:24px;height:24px;border-radius:3px;background:linear-gradient(#fafafa,#e6e6e6);box-shadow:0 0 2px #678;text-align:center;font-size:11px;line-height:22px;color:#333}
.pager .cur{background:linear-gradient(#9ccde8,#79a9c4)}.pager .ar{color:#6ea9cc;font-size:10px;white-space:nowrap}

/* process file dialog */
.proc{left:166px;top:2369px;width:781px;height:449px;background:#ffff55;font:10.500px/14px "Open Sans",sans-serif;color:#44440a}
.proc:before{content:"";position:absolute;left:4px;top:3px;width:2px;height:443px;background:#55552a}
.pbar{margin:3px 3px 0 5px;height:35px;background:linear-gradient(#6cb44e,#58aa56 30%,#58aa56 70%,#6cb44e);display:flex;justify-content:flex-end;align-items:center;padding-right:2px}
.proc .tag{background:#ffff55;color:#5aa300;border-color:#5aa300;font:16px/18px "Liberation Sans",sans-serif}
.ptitle{position:absolute;left:4px;top:1px;width:160px;height:38px}
.pcols{display:flex;height:371px;border-bottom:1px solid #eaea45;padding-left:14px}
.form{width:379px;padding-top:7px}
.r{display:flex;align-items:center}
.r i{border:1px solid #c6c640;border-bottom-color:#9c9c35;border-radius:2px;display:flex;align-items:center;padding-left:4px;height:100%;font-size:10.500px;letter-spacing:-.2px;position:relative}
.r u{margin-left:auto;font-size:8px;padding-right:2px}
.proc label{width:45px;white-space:nowrap}
.proc label span,.fd span,.nt span,.ah span{display:inline-block;transform:scaleX(.74);transform-origin:0 50%}
.proc em{color:#f00}
.proc .l2{width:64px;margin-left:5px}
.w1{width:160px}.w2{width:102px}
.r1{height:26px;margin-bottom:3px}.r2{height:21px;margin-bottom:3px}.r3{height:22px;margin-bottom:3px}.r4{height:23px}
.fd{height:32px;border-bottom:1px solid #e6e648;margin-bottom:14px}
.proc .l3{width:105px}.w3{width:270px}.r5{height:24px}
.proc .l4{width:108px}.w4{width:111px}.proc .l5{width:44px;padding-left:3px}.r6{height:23px;margin-top:1px}
.nt{height:14px}.ta{width:347px;height:68px;border:1px solid #8c8c30}
.proc .l6{width:57px}.w5{width:305px}.r7{height:21px;margin-top:11px}.r8{height:24px;margin-top:8px}.r .ph{color:#808020;padding-left:7px;font-size:11px}
.att{width:343px}
.ah{display:flex;justify-content:space-between;height:27px;padding:6px 0 0;border-bottom:1px solid #c9c940;margin-right:18px}.ah .up{transform-origin:100% 50%;font-weight:600;color:#3f6d0a}
.abox{height:280px;margin-top:5px;border:1px solid #8c8c30;display:flex;justify-content:space-between}
.pfoot{display:flex;gap:5px;margin:2px 0 0 631px}.pfoot .tag{width:85px;height:35px}
.pfoot b{width:50px;height:23px;margin-top:6px;background:linear-gradient(#ffff60,#e9e948);border-bottom:2px solid #b5b53a;font:600 10px/21px "Open Sans";text-align:center;letter-spacing:-.8px}
.pcol{position:absolute;left:1136px;top:2366px;width:33px;height:335px;background:#fff;border:solid #5fa624;border-width:0 3px 3px 0}
.pcol svg{position:absolute;width:30px;height:31px;background:#fff}

.marks{position:absolute;left:0;top:0}.sh{filter:drop-shadow(1px 3px 2px rgba(0,0,0,.45))}
.note{position:absolute;color:#e94b43;text-align:center;white-space:nowrap}
.na{left:520px;top:603px;width:160px}
.nb{left:500px;top:2147px;width:514px;font-size:15.600px}
.nc{left:868px;top:2318px;width:162px}
```
